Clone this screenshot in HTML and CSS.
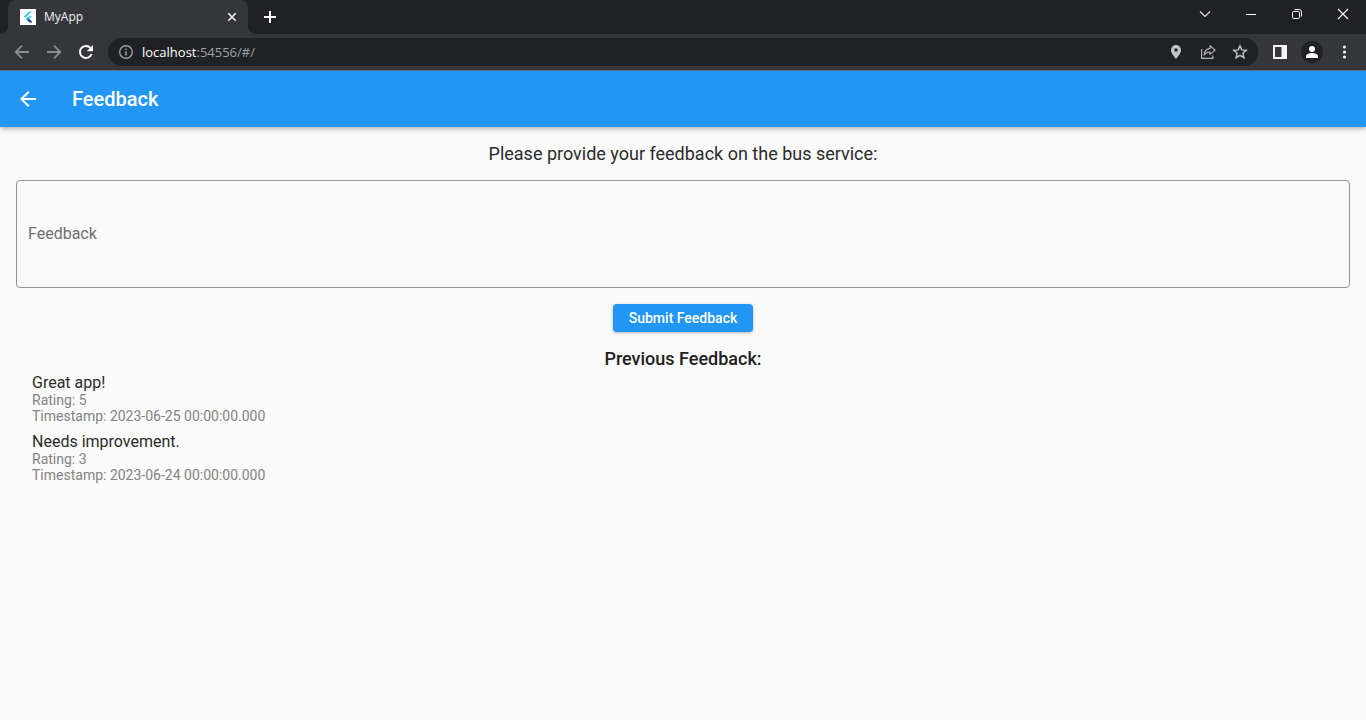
FILE: index.html
```html
<!DOCTYPE html>
<html lang="en">
<head>
<meta charset="utf-8">
<meta name="viewport" content="width=device-width, initial-scale=1">
<title>MyApp</title>
<link rel="stylesheet" href="styles.css">
</head>
<body>
<div class="browser">
  <div class="tab-strip">
    <div class="tab">
      <svg class="favicon" viewBox="0 0 16 16" width="16" height="16" aria-hidden="true">
        <rect width="16" height="16" fill="#fff"/>
        <path d="M8.800 2.500h3.200L5.300 9.100 3.700 7.500z" fill="#54c5f8"/>
        <path d="M8.800 7.300h3.200L9.300 10 7.700 11.500 6.100 10z" fill="#54c5f8"/>
        <path d="M6.100 10 7.700 8.400l1.600 1.600-1.600 1.500z" fill="#1c9be8"/>
        <path d="M7.700 11.500 9.300 10l2.700 2.800v.7H9.400z" fill="#01478b"/>
      </svg>
      <span class="tab-title">MyApp</span>
      <button class="icon-button tab-close" type="button" aria-label="Close tab">
        <svg viewBox="0 0 16 16" width="16" height="16"><path d="M4.300 4.300l7.400 7.400M11.700 4.300l-7.400 7.400" stroke="#f1f1f1" stroke-width="1.600" fill="none"/></svg>
      </button>
    </div>
    <button class="icon-button new-tab" type="button" aria-label="New tab">
      <svg viewBox="0 0 16 16" width="16" height="16"><path d="M8 2v12M2 8h12" stroke="#fff" stroke-width="2" fill="none"/></svg>
    </button>
    <div class="window-controls">
      <button class="icon-button" type="button" aria-label="Search tabs">
        <svg viewBox="0 0 16 16" width="16" height="16"><path d="M3 5.500l5 5 5-5" stroke="#e4e4e4" stroke-width="1.100" fill="none"/></svg>
      </button>
      <button class="icon-button" type="button" aria-label="Minimize">
        <svg viewBox="0 0 16 16" width="16" height="16"><path d="M3 8.500h10" stroke="#fff" fill="none"/></svg>
      </button>
      <button class="icon-button" type="button" aria-label="Restore">
        <svg viewBox="0 0 16 16" width="16" height="16"><g stroke="#f5f5f5" fill="none"><rect x="3.500" y="5.500" width="7" height="7" rx="1.200"/><path d="M5.500 3.500H10a2.500 2.500 0 0 1 2.500 2.500v4.500"/></g></svg>
      </button>
      <button class="icon-button" type="button" aria-label="Close window">
        <svg viewBox="0 0 16 16" width="16" height="16"><path d="M3 3l10 10M13 3L3 13" stroke="#fff" stroke-width="1.100" fill="none"/></svg>
      </button>
    </div>
  </div>
  <div class="toolbar">
    <button class="icon-button" type="button" aria-label="Back">
      <svg viewBox="0 0 16 16" width="16" height="16"><path d="M15 8H2M8 1.700L1.700 8 8 14.300" stroke="#8b8c8f" stroke-width="1.800" fill="none"/></svg>
    </button>
    <button class="icon-button" type="button" aria-label="Forward">
      <svg viewBox="0 0 16 16" width="16" height="16"><path d="M1 8h13M8 1.700L14.300 8 8 14.300" stroke="#8b8c8f" stroke-width="1.800" fill="none"/></svg>
    </button>
    <button class="icon-button" type="button" aria-label="Reload">
      <svg viewBox="0 0 16 16" width="16" height="16"><path d="M13.600 10A6 6 0 1 1 12.400 3.900" stroke="#fff" stroke-width="2" fill="none"/><path d="M15 1v6.300H8.700z" fill="#fff"/></svg>
    </button>
    <div class="address">
      <svg viewBox="0 0 16 16" width="16" height="16" aria-hidden="true"><circle cx="8" cy="8" r="6.300" stroke="#9aa0a6" stroke-width="1.400" fill="none"/><path d="M8 7.200v4.300M8 4.500v1.500" stroke="#9aa0a6" stroke-width="1.500"/></svg>
      <a class="url" href="#/"><span class="url-host">localhost</span>:54556/#/</a>
      <div class="address-actions">
        <button class="icon-button" type="button" aria-label="Location">
          <svg viewBox="0 0 16 16" width="16" height="16"><path d="M8 1a5 5 0 0 0-5 5c0 3.600 5 9 5 9s5-5.400 5-9a5 5 0 0 0-5-5zm0 3.200a1.800 1.800 0 1 1 0 3.600 1.800 1.800 0 0 1 0-3.600z" fill="#c4c5c7"/></svg>
        </button>
        <button class="icon-button" type="button" aria-label="Share">
          <svg viewBox="0 0 16 16" width="16" height="16"><g stroke="#b4b5b8" stroke-width="1.200" fill="none"><path d="M1.600 5v9.400h11.300V11.500"/><path d="M10 1.800l5.100 4.300-5.100 4.300V8c-2.700 0-4.500.9-5.900 3 .3-3.500 2.200-6 5.900-6.600z" stroke-linejoin="round"/></g></svg>
        </button>
        <button class="icon-button" type="button" aria-label="Bookmark">
          <svg viewBox="0 0 16 16" width="16" height="16"><path d="M8 1.800l1.800 4.100 4.500.4-3.400 3 1 4.400L8 11.400l-3.900 2.300 1-4.400-3.400-3 4.500-.4z" stroke="#c0c1c4" stroke-width="1.500" fill="none"/></svg>
        </button>
      </div>
    </div>
    <button class="icon-button" type="button" aria-label="Side panel">
      <svg viewBox="0 0 16 16" width="16" height="16"><path d="M1 1h14v14H1zM3 3v10h6.500V3z" fill="#f4f4f6" fill-rule="evenodd"/></svg>
    </button>
    <button class="icon-button profile" type="button" aria-label="Profile">
      <svg viewBox="0 0 16 16" width="16" height="16"><circle cx="8" cy="5" r="3" fill="#fff"/><path d="M2 14v-1.800C2 10 6 9 8 9s6 1 6 3.200V14z" fill="#fff"/></svg>
    </button>
    <button class="icon-button" type="button" aria-label="Menu">
      <svg viewBox="0 0 16 16" width="16" height="16"><g fill="#f1f1f1"><circle cx="8.500" cy="3" r="1.600"/><circle cx="8.500" cy="8" r="1.600"/><circle cx="8.500" cy="13" r="1.600"/></g></svg>
    </button>
  </div>
</div>

<header class="app-bar">
  <button class="icon-button" type="button" aria-label="Go back">
    <svg viewBox="0 0 24 24" width="24" height="24"><path d="M20 11H7.830l5.590-5.590L12 4l-8 8 8 8 1.410-1.410L7.830 13H20z" fill="#fff"/></svg>
  </button>
  <h1 class="app-title">Feedback</h1>
</header>

<main class="content">
  <p class="prompt">Please provide your feedback on the bus service:</p>
  <form class="feedback-form">
    <div class="field">
      <textarea class="field-input" id="feedback" placeholder=" "></textarea>
      <label class="field-label" for="feedback">Feedback</label>
    </div>
    <button class="submit" type="button">Submit Feedback</button>
  </form>
  <section class="previous">
    <h2 class="previous-title">Previous Feedback:</h2>
    <ul class="entries">
      <li class="entry">
        <p class="entry-title">Great app!</p>
        <p class="entry-detail">Rating: 5</p>
        <p class="entry-detail">Timestamp: 2023-06-25 00:00:00.000</p>
      </li>
      <li class="entry">
        <p class="entry-title">Needs improvement.</p>
        <p class="entry-detail">Rating: 3</p>
        <p class="entry-detail">Timestamp: 2023-06-24 00:00:00.000</p>
      </li>
    </ul>
  </section>
</main>
</body>
</html>
```
FILE: styles.css
```css
* {
  box-sizing: border-box;
}

body {
  margin: 0;
  min-height: 100vh;
  display: flex;
  flex-direction: column;
  background: #fafafa;
  color: #2b2b2b;
  font-family: Roboto, sans-serif;
  font-size: 16px;
}

h1, h2, p, ul {
  margin: 0;
  padding: 0;
}

.icon-button {
  display: flex;
  align-items: center;
  justify-content: center;
  flex: none;
  padding: 0;
  border: 0;
  background: none;
  cursor: pointer;
}

/* Browser frame */
.browser {
  background: #35363a;
  border-bottom: 1px solid #596f87;
  font-family: "Open Sans", "Noto Sans", sans-serif;
}

.tab-strip {
  display: flex;
  height: 34px;
  padding-left: 8px;
  background: #202124;
}

.tab {
  position: relative;
  display: flex;
  align-items: center;
  gap: 8px;
  width: 240px;
  padding: 0 8px 0 12px;
  border-radius: 8px 8px 0 0;
  background: #35363a;
}

.tab::before,
.tab::after {
  content: "";
  position: absolute;
  bottom: 0;
  width: 8px;
  height: 8px;
}

.tab::before {
  right: 100%;
  background: radial-gradient(circle at 0 0, #202124 8px, #35363a 8px);
}

.tab::after {
  left: 100%;
  background: radial-gradient(circle at 100% 0, #202124 8px, #35363a 8px);
}

.tab-title {
  flex: 1;
  color: #f1f3f4;
  font-size: 12px;
  line-height: 16px;
}

.new-tab {
  margin-left: 14px;
}

.window-controls {
  display: flex;
  height: 28px;
  margin-left: auto;
}

.window-controls .icon-button {
  width: 46px;
}

.toolbar {
  display: flex;
  align-items: center;
  gap: 16px;
  height: 36px;
  padding: 0 14px;
}

.address {
  display: flex;
  flex: 1;
  align-items: center;
  gap: 8px;
  height: 28px;
  margin-left: -2px;
  padding: 0 10px;
  border-radius: 14px;
  background: #202124;
}

.url {
  flex: 1;
  color: #9aa0a6;
  font-size: 13px;
  line-height: 20px;
  text-decoration: none;
}

.url-host {
  color: #fff;
}

.address-actions {
  display: flex;
  gap: 16px;
}

.address + .icon-button {
  margin-left: -2px;
}

.profile {
  width: 22px;
  height: 22px;
  margin: 0 -3px;
  border-radius: 50%;
  background: #202124;
}

/* Application */
.app-bar {
  display: flex;
  align-items: center;
  gap: 32px;
  height: 56px;
  padding: 0 16px;
  background: #2196f3;
  box-shadow: 0 2px 4px -1px rgba(0, 0, 0, 0.2), 0 3px 5px rgba(0, 0, 0, 0.12);
}

.app-title {
  color: #fff;
  font-size: 20px;
  font-weight: 500;
  line-height: 25px;
}

.content {
  padding: 16px;
}

.prompt {
  font-size: 18px;
  line-height: 21px;
  text-align: center;
}

.feedback-form {
  display: flex;
  flex-direction: column;
  align-items: center;
  gap: 16px;
  margin: 16px 0;
}

.field {
  display: grid;
  width: 100%;
  align-items: center;
}

.field-input,
.field-label {
  grid-area: 1 / 1;
}

.field-input {
  width: 100%;
  height: 108px;
  padding: 20px 11px;
  border: 1px solid #939393;
  border-radius: 4px;
  outline: 0;
  background: transparent;
  color: #212121;
  font: 16px/20px Roboto, sans-serif;
  resize: none;
}

.field-input:focus {
  border-color: #2196f3;
}

.field-label {
  padding-left: 12px;
  color: #707070;
  line-height: 20px;
  pointer-events: none;
}

.field-input:not(:placeholder-shown) + .field-label {
  visibility: hidden;
}

.submit {
  height: 28px;
  padding: 0 16px;
  border: 0;
  border-radius: 4px;
  background: #2196f3;
  box-shadow: 0 1px 3px rgba(0, 0, 0, 0.3);
  color: #fff;
  font: 500 14px/16px Roboto, sans-serif;
  cursor: pointer;
}

.previous-title {
  color: #212121;
  font-size: 18px;
  font-weight: 500;
  line-height: 21px;
  text-align: center;
}

.entries {
  padding: 0 16px;
  list-style: none;
}

.entry {
  padding: 4px 0;
}

.entry-title {
  line-height: 19px;
}

.entry-detail {
  color: #838383;
  font-size: 14px;
  line-height: 16px;
}
```
